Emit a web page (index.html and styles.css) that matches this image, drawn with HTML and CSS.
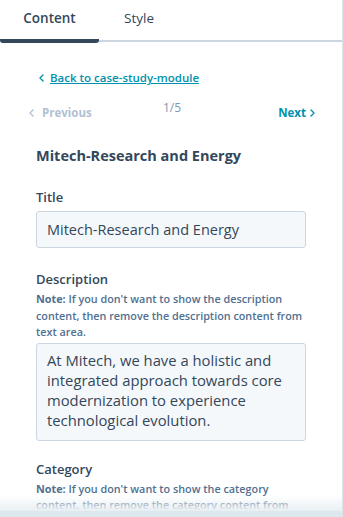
FILE: index.html
```html
<!DOCTYPE html>
<html lang="en">
<head>
<meta charset="UTF-8" />
<title>Module editor</title>
<link rel="stylesheet" href="styles.css">
</head>
<body>

<div class="panel">

	<div class="tabs">
		<div class="tab active">Content</div>
		<div class="tab">Style</div>
	</div>

	<div class="content">

		<a class="back" href="#">
			<svg class="chev" width="5" height="8" viewBox="0 0 5 8"><path d="M4 1 L1 4 L4 7" fill="none" stroke="currentColor" stroke-width="1.4" stroke-linecap="round" stroke-linejoin="round"/></svg>
			<span class="back-text">Back to case-study-module</span>
		</a>

		<div class="pager">
			<span class="prev">
				<svg class="chev" width="5" height="8" viewBox="0 0 5 8"><path d="M4 1 L1 4 L4 7" fill="none" stroke="currentColor" stroke-width="1.4" stroke-linecap="round" stroke-linejoin="round"/></svg>
				Previous
			</span>
			<span class="count">1/5</span>
			<a class="next" href="#">
				Next
				<svg class="chev" width="5" height="8" viewBox="0 0 5 8"><path d="M1 1 L4 4 L1 7" fill="none" stroke="currentColor" stroke-width="1.4" stroke-linecap="round" stroke-linejoin="round"/></svg>
			</a>
		</div>

		<h2>Mitech-Research and Energy</h2>

		<div class="field">
			<label>Title</label>
			<div class="input">Mitech-Research and Energy</div>
		</div>

		<div class="field">
			<label>Description</label>
			<p class="note"><b>Note:</b> If you don't want to show the description content, then remove the description content from text area.</p>
			<div class="textarea">At Mitech, we have a holistic and integrated approach towards core modernization to experience technological evolution.</div>
		</div>

		<div class="field after-area">
			<label>Category</label>
			<p class="note"><b>Note:</b> If you don't want to show the category content, then remove the category content from text area.</p>
		</div>

	</div>

	<div class="fade"></div>
</div>

</body>
</html>
```

FILE: styles.css
```css
body
{
	margin: 0;
	font-family: "Open Sans", sans-serif;
	color: #33475b;
	background-color: #fff;
	overflow: hidden;
}

.panel
{
	position: relative;
	width: 342px;
	height: 517px;
	border-right: 1px solid #dfe3eb;
	overflow: hidden;
}

.tabs
{
	display: flex;
	height: 40px;
	border-bottom: 2px solid #cbd6e2;
}

.tab
{
	width: 80px;
	text-align: center;
	font-size: 13.5px;
	line-height: 37px;
	color: #33475b;
}

.tab.active
{
	width: 99px;
	height: 39px;
	font-weight: 600;
	border-bottom: 4px solid #33475b;
	border-radius: 0 0 3px 3px;
}

.content
{
	padding: 28px 36px 0 36px;
}

.back
{
	display: flex;
	align-items: center;
	gap: 6px;
	margin-left: 3px;
	color: #0091ae;
	font-size: 11.5px;
	font-weight: 600;
	text-decoration: none;
	line-height: 16px;
}

.back-text
{
	text-decoration: underline;
}

.pager
{
	display: grid;
	grid-template-columns: 1fr auto 1fr;
	align-items: start;
	margin: 14px -9px 0 -7px;
	font-size: 11.5px;
	font-weight: 700;
	line-height: 16px;
}

.prev, .next
{
	display: flex;
	align-items: center;
	gap: 8px;
	margin-top: 5px;
}

.prev
{
	color: #b0c1d4;
}

.count
{
	font-size: 12px;
	font-weight: 400;
	color: #7c98b6;
}

.next
{
	justify-self: end;
	gap: 4px;
	color: #0091ae;
	text-decoration: none;
}

h2
{
	margin: 25px 0 0 0;
	font-size: 14.5px;
	font-weight: 700;
	line-height: 20px;
}

.field
{
	margin-top: 22px;
}

.field.after-area
{
	margin-top: 19px;
}

label
{
	display: block;
	font-size: 13px;
	font-weight: 600;
	line-height: 18px;
	margin-bottom: 5px;
}

.note
{
	margin: -2px 0 2px 0;
	font-size: 10.8px;
	font-weight: 600;
	line-height: 16.5px;
	color: #516f90;
}

.note b
{
	font-weight: 700;
}

.input, .textarea
{
	background-color: #f5f8fa;
	border: 1px solid #cbd6e2;
	border-radius: 3px;
	padding: 0 10px;
	color: #33475b;
}

.input
{
	height: 35px;
	line-height: 35px;
	font-size: 14.5px;
}

.textarea
{
	height: 85px;
	padding-top: 6px;
	padding-bottom: 5px;
	font-size: 14.8px;
	line-height: 20px;
}

.fade
{
	position: absolute;
	left: 0;
	right: 0;
	bottom: 0;
	height: 22px;
	background: linear-gradient(rgba(234, 240, 244, 0), #eaf0f4 70%, #dde8ee 75%);
}
```
